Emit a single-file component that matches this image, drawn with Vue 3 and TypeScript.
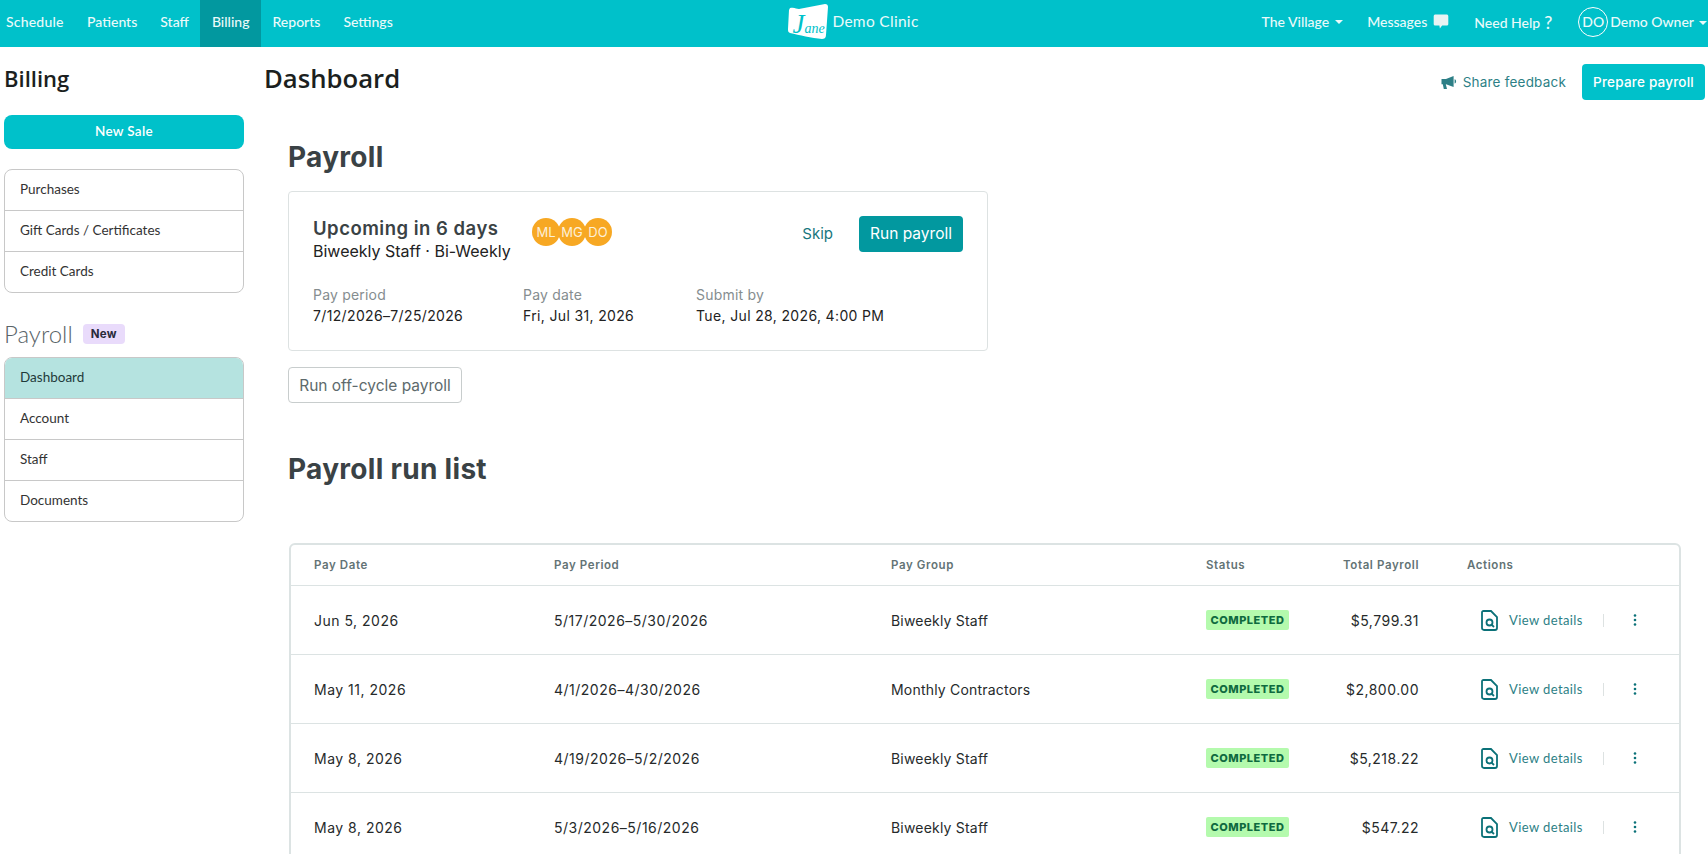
<template>
  <div class="app">
    <header class="topbar">
      <nav class="nav-left">
        <a v-for="item in navItems" :key="item" class="nav-item" :class="{ active: item === 'Billing' }">{{ item }}</a>
      </nav>
      <div class="brand">
        <span class="logo">
          <svg width="42" height="38" viewBox="0 0 42 38">
            <path d="M3 6 C8 5 9 7 12 7 L38 2 C40 2 41 3 41 5 L39 33 C39 36 37 37 35 37 C25 36 12 33 3 31 C1 30 1 29 1 27 L2 8 Z" fill="#fff" />
          </svg>
          <span class="logo-word"><span class="logo-j">J</span>ane</span>
        </span>
        <span class="clinic">Demo Clinic</span>
      </div>
      <div class="nav-right">
        <a class="nav-item right-item village">The Village <i class="caret"></i></a>
        <a class="nav-item right-item messages">
          Messages
          <svg width="16" height="15" viewBox="0 0 15 15"><path d="M2 0.5 H13 C14 0.5 14.8 1.2 14.8 2.2 V10 C14.8 11 14 11.6 13 11.6 H8.6 L6.4 14.4 L5.9 11.6 H2 C1 11.6 0.2 11 0.2 10 V2.2 C0.2 1.2 1 0.5 2 0.5 Z" fill="#e9f3f3" /></svg>
        </a>
        <a class="nav-item right-item help">Need Help <span class="qmark">?</span></a>
        <a class="nav-item right-item owner">
          <span class="owner-avatar">DO</span>
          Demo Owner <i class="caret"></i>
        </a>
      </div>
    </header>

    <div class="layout">
      <aside class="sidebar">
        <h2 class="side-title">Billing</h2>
        <button class="new-sale">New Sale</button>
        <ul class="side-list">
          <li v-for="item in billingLinks" :key="item">{{ item }}</li>
        </ul>
        <div class="side-sub">
          <span>Payroll</span>
          <em class="new-badge">New</em>
        </div>
        <ul class="side-list">
          <li v-for="item in payrollLinks" :key="item" :class="{ selected: item === 'Dashboard' }">{{ item }}</li>
        </ul>
      </aside>

      <main class="content">
        <div class="page-head">
          <h1 class="page-title">Dashboard</h1>
          <div class="page-actions">
            <a class="feedback">
              <svg width="16" height="15" viewBox="0 0 16 14"><path d="M0.5 3.6 H5 L12.6 0.4 V11.6 L5 8.8 H4.8 L6 13.6 H2.8 L1.8 8.8 H0.5 Z M13.6 3.8 C15.6 4.2 15.6 7.6 13.6 8 Z" fill="#2d7f86" /></svg>
              Share feedback
            </a>
            <button class="prepare">Prepare payroll</button>
          </div>
        </div>

        <div class="inner">
          <h2 class="section-title">Payroll</h2>
          <section class="upcoming">
            <div class="upcoming-top">
              <div class="upcoming-name">
                <div class="upcoming-when">Upcoming in 6 days</div>
                <div class="upcoming-group">Biweekly Staff · Bi-Weekly</div>
              </div>
              <div class="avatars">
                <span v-for="a in avatars" :key="a" class="avatar">{{ a }}</span>
              </div>
              <a class="skip">Skip</a>
              <button class="run">Run payroll</button>
            </div>
            <div class="meta">
              <div v-for="m in meta" :key="m.label" class="meta-col">
                <div class="meta-label">{{ m.label }}</div>
                <div class="meta-value">{{ m.value }}</div>
              </div>
            </div>
          </section>
          <button class="off-cycle">Run off-cycle payroll</button>

          <h2 class="section-title list-title">Payroll run list</h2>

          <section class="table">
            <div class="row head">
              <span>Pay Date</span>
              <span>Pay Period</span>
              <span>Pay Group</span>
              <span>Status</span>
              <span class="num">Total Payroll</span>
              <span class="actions-head">Actions</span>
            </div>
            <div v-for="(r, i) in runs" :key="i" class="row">
              <span>{{ r.date }}</span>
              <span>{{ r.period }}</span>
              <span class="group">{{ r.group }}</span>
              <span><b class="status">COMPLETED</b></span>
              <span class="num">{{ r.total }}</span>
              <span class="actions">
                <svg width="17" height="21" viewBox="0 0 17 21">
                  <path d="M2.5 1 H10 L16 7 V18 C16 19.2 15.2 20 14 20 H3 C1.8 20 1 19.2 1 18 V2.5 C1 1.6 1.6 1 2.5 1 Z" fill="none" stroke="#0b7178" stroke-width="1.8" />
                  <circle cx="8.5" cy="12.5" r="3" fill="none" stroke="#0b7178" stroke-width="1.8" />
                  <path d="M10.8 14.8 L13 17" stroke="#0b7178" stroke-width="1.8" />
                </svg>
                <a class="view">View details</a>
                <i class="divider"></i>
                <svg class="dots" width="4" height="12" viewBox="0 0 4 12"><circle cx="2" cy="1.5" r="1.3" /><circle cx="2" cy="6" r="1.3" /><circle cx="2" cy="10.5" r="1.3" /></svg>
              </span>
            </div>
          </section>
        </div>
      </main>
    </div>
  </div>
</template>

<script setup lang="ts">
interface Run {
  date: string
  period: string
  group: string
  total: string
}

const navItems = ['Schedule', 'Patients', 'Staff', 'Billing', 'Reports', 'Settings']
const billingLinks = ['Purchases', 'Gift Cards / Certificates', 'Credit Cards']
const payrollLinks = ['Dashboard', 'Account', 'Staff', 'Documents']
const avatars = ['ML', 'MG', 'DO']

const meta = [
  { label: 'Pay period', value: '7/12/2026–7/25/2026' },
  { label: 'Pay date', value: 'Fri, Jul 31, 2026' },
  { label: 'Submit by', value: 'Tue, Jul 28, 2026, 4:00 PM' }
]

const runs: Run[] = [
  { date: 'Jun 5, 2026', period: '5/17/2026–5/30/2026', group: 'Biweekly Staff', total: '$5,799.31' },
  { date: 'May 11, 2026', period: '4/1/2026–4/30/2026', group: 'Monthly Contractors', total: '$2,800.00' },
  { date: 'May 8, 2026', period: '4/19/2026–5/2/2026', group: 'Biweekly Staff', total: '$5,218.22' },
  { date: 'May 8, 2026', period: '5/3/2026–5/16/2026', group: 'Biweekly Staff', total: '$547.22' }
]
</script>

<style>
html,
body {
  margin: 0;
  background: #fff;
}
</style>

<style scoped>
.app {
  height: 854px;
  overflow: hidden;
  font-family: Lato, "Open Sans", sans-serif;
  color: #222;
}

.topbar {
  height: 47px;
  background: #00c1ca;
  display: grid;
  grid-template-columns: 1fr auto 1fr;
  align-items: stretch;
  color: #eafafa;
  font-size: 14px;
}

.nav-left {
  display: flex;
}

.nav-item {
  display: flex;
  align-items: center;
  padding: 0 11.5px 5px;
  font-weight: 500;
}

.nav-left .nav-item:first-child {
  padding-left: 6px;
  padding-right: 12px;
  letter-spacing: 0.2px;
}

.nav-item.active {
  background: #02989f;
}

.brand {
  display: flex;
  align-items: center;
  gap: 5px;
  padding: 0 2px 5px 0;
}

.logo {
  position: relative;
  display: block;
  width: 40px;
  height: 38px;
}

.logo svg {
  display: block;
}

.logo-word {
  position: absolute;
  left: 5px;
  top: 14px;
  font-family: "Liberation Serif", serif;
  font-style: italic;
  font-size: 14px;
  line-height: 16px;
  color: #00c1ca;
}

.logo-j {
  font-size: 27px;
  line-height: 16px;
}

.clinic {
  font-size: 15.5px;
  letter-spacing: 0.3px;
}

.nav-right {
  display: flex;
  justify-content: flex-end;
}

.right-item {
  padding: 0 0 5px;
}

.village {
  margin-right: 24px;
  gap: 6px;
}

.messages {
  margin-right: 25px;
  gap: 6px;
}

.help {
  margin-right: 26px;
  gap: 4px;
  padding-bottom: 3px;
}

.qmark {
  font-size: 18px;
}

.owner {
  gap: 5px;
  margin-right: 1px;
  padding-bottom: 4px;
}

.owner-avatar {
  width: 30px;
  height: 30px;
  margin-right: -3px;
  box-sizing: border-box;
  border: 1px solid #fff;
  border-radius: 50%;
  display: flex;
  align-items: center;
  justify-content: center;
  font-size: 14px;
}

.caret {
  display: inline-block;
  width: 0;
  height: 0;
  margin-top: 2px;
  border-left: 4px solid transparent;
  border-right: 4px solid transparent;
  border-top: 4px solid #eafafa;
}

.layout {
  display: flex;
}

.sidebar {
  width: 240px;
  margin-left: 4px;
  flex: none;
}

.side-title {
  margin: 18px 0 0;
  font-size: 22px;
  line-height: 27px;
  font-weight: 600;
  font-family: "Open Sans", sans-serif;
  color: #1b1f20;
}

.new-sale {
  display: block;
  width: 100%;
  height: 34px;
  margin-top: 23px;
  padding-bottom: 3px;
  border: 0;
  border-radius: 8px;
  background: #00c1ca;
  color: #fff;
  font: 600 13.5px Lato, sans-serif;
  letter-spacing: 0.3px;
}

.side-list {
  list-style: none;
  margin: 20px 0 0;
  padding: 0;
  border: 1px solid #c8c8c8;
  border-radius: 8px;
  overflow: hidden;
}

.side-list li {
  height: 41px;
  padding-left: 15px;
  padding-bottom: 2px;
  box-sizing: border-box;
  display: flex;
  align-items: center;
  font-size: 13.5px;
  color: #333;
  border-top: 1px solid #c8c8c8;
}

.side-list li:first-child {
  height: 40px;
  border-top: 0;
}

.side-list li.selected {
  background: #b5e3e0;
  color: #1f3a3a;
}

.side-sub {
  margin-top: 23px;
  height: 41px;
  padding-bottom: 6px;
  box-sizing: border-box;
  display: flex;
  align-items: center;
  gap: 10px;
  font-size: 24px;
  font-weight: 300;
  color: #5a6468;
}

.side-sub + .side-list {
  margin-top: 0;
}

.new-badge {
  font: 700 11.5px Inter, sans-serif;
  color: #2a2a3a;
  background: #e9dbfb;
  border-radius: 4px;
  padding: 3px 8px;
  letter-spacing: 0.3px;
}

.content {
  flex: 1;
  min-width: 0;
  padding-left: 20px;
}

.page-head {
  display: flex;
  justify-content: space-between;
  padding-top: 17px;
  padding-right: 3px;
}

.page-title {
  margin: 0;
  font-family: "Open Sans", sans-serif;
  font-size: 25.7px;
  line-height: 30px;
  font-weight: 600;
  color: #1b1f20;
}

.page-actions {
  display: flex;
  align-items: center;
  gap: 16px;
  height: 36px;
}

.feedback {
  display: flex;
  align-items: center;
  gap: 6px;
  font: 400 13.5px Inter, sans-serif;
  letter-spacing: 0.2px;
  color: #2d7f86;
}

.prepare {
  width: 123px;
  height: 36px;
  padding: 0;
  border: 0;
  border-radius: 4px;
  background: #00c1ca;
  color: #fff;
  font: 500 13.5px Inter, sans-serif;
  letter-spacing: 0.2px;
}

.inner {
  padding-left: 24px;
  font-family: Inter, sans-serif;
}

.section-title {
  margin: 0;
  font-size: 28px;
  line-height: 34px;
  font-weight: 700;
  letter-spacing: 0.3px;
  color: #3a4245;
}

.inner > .section-title:first-child {
  margin-top: 40px;
}

.upcoming {
  width: 700px;
  height: 160px;
  box-sizing: border-box;
  margin-top: 17px;
  padding: 24px 24px 0;
  border: 1px solid #dde2e2;
  border-radius: 4px;
}

.upcoming-top {
  display: flex;
  height: 48px;
}

.upcoming-name {
  width: 219px;
  flex: none;
  padding-top: 1px;
}

.upcoming-when {
  font-size: 18.5px;
  line-height: 22px;
  font-weight: 600;
  letter-spacing: 0.5px;
  color: #3a4245;
}

.upcoming-group {
  margin-top: 2px;
  font-size: 16px;
  line-height: 20px;
  color: #222;
}

.avatars {
  display: flex;
  gap: 0;
  padding-top: 2px;
}

.avatar {
  width: 28px;
  height: 28px;
  margin-right: -2px;
  border-radius: 50%;
  background: #f7a823;
  color: #fdf0d8;
  font-size: 13px;
  display: flex;
  align-items: center;
  justify-content: center;
}

.skip {
  margin-left: auto;
  margin-right: 26px;
  margin-top: 8px;
  font-size: 15px;
  color: #17767d;
}

.run {
  width: 104px;
  height: 36px;
  padding: 0 0 2px;
  border: 0;
  border-radius: 4px;
  background: #02989f;
  color: #fff;
  font: 400 15.5px Inter, sans-serif;
}

.meta {
  display: flex;
  margin-top: 22px;
}

.meta-col:nth-child(1) {
  width: 210px;
}

.meta-col:nth-child(2) {
  width: 173px;
}

.meta-label {
  font-size: 14px;
  line-height: 18px;
  color: #858d8f;
  letter-spacing: 0.2px;
}

.meta-value {
  margin-top: 3px;
  font-size: 14px;
  line-height: 18px;
  color: #222;
  letter-spacing: 0.35px;
}

.off-cycle {
  display: block;
  width: 174px;
  height: 36px;
  margin-top: 16px;
  padding: 0;
  border: 1px solid #c8cdcd;
  border-radius: 4px;
  background: #fff;
  color: #5d6a6c;
  font: 400 15.5px Inter, sans-serif;
}

.list-title {
  margin-top: 49px;
}

.table {
  width: 1392px;
  margin-top: 57px;
  margin-left: 1px;
  border: 1px solid #dce3e3;
  border-top-width: 2px;
  border-left-width: 2px;
  border-right-width: 2px;
  border-radius: 6px 6px 0 0;
  box-sizing: border-box;
}

.row {
  display: grid;
  grid-template-columns: 240px 337px 315px 110px 103px 1fr;
  align-items: center;
  height: 69px;
  padding-left: 23px;
  border-top: 1px solid #dce3e3;
  box-sizing: border-box;
  font-size: 14px;
  letter-spacing: 0.5px;
  color: #262a2b;
}

.row .group {
  letter-spacing: 0.2px;
}

.row.head {
  height: 40px;
  border-top: 0;
  font-size: 11.5px;
  font-weight: 600;
  letter-spacing: 0.6px;
  color: #637375;
}

.num {
  text-align: right;
  white-space: nowrap;
}

.actions-head {
  padding-left: 48px;
}

.status {
  display: inline-block;
  width: 83px;
  text-align: center;
  line-height: 20px;
  background: #b4faad;
  border-radius: 2px;
  color: #0f6a3f;
  font-size: 11px;
  font-weight: 800;
  letter-spacing: 0.5px;
}

.actions {
  display: flex;
  align-items: center;
  padding-left: 62px;
}

.view {
  margin-left: 11px;
  font: 400 13px Lato, sans-serif;
  letter-spacing: 0.4px;
  color: #2d7f86;
}

.divider {
  width: 1px;
  height: 13px;
  margin-left: 20px;
  background: #dde2e2;
}

.dots {
  margin-left: 29px;
  fill: #0b7178;
}
</style>
